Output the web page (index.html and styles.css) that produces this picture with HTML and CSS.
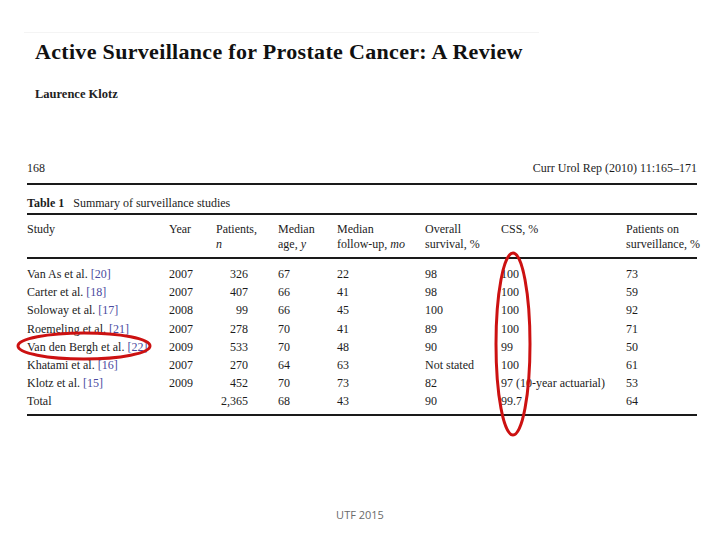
FILE: index.html
```html
<!DOCTYPE html>
<html>
<head>
<meta charset="utf-8">
<link rel="stylesheet" href="styles.css">
</head>
<body>
<div class="slide">
  <div class="paper-head">
    <h1 class="title">Active Surveillance for Prostate Cancer: A Review</h1>
    <div class="author">Laurence Klotz</div>
  </div>
  <div class="page">
    <div class="running">
      <span>168</span>
      <span>Curr Urol Rep (2010) 11:165–171</span>
    </div>
    <div class="caption"><b>Table 1</b>&nbsp;&nbsp; Summary of surveillance studies</div>
    <table class="studies">
      <colgroup>
        <col class="c1"><col class="c2"><col class="c3"><col class="c4"><col class="c5"><col class="c6"><col class="c7"><col class="c8">
      </colgroup>
      <thead>
        <tr>
          <th>Study</th>
          <th>Year</th>
          <th>Patients,<br><i>n</i></th>
          <th>Median<br>age, <i>y</i></th>
          <th>Median<br>follow-up, <i>mo</i></th>
          <th>Overall<br>survival, %</th>
          <th>CSS, %</th>
          <th>Patients on<br>surveillance, %</th>
        </tr>
      </thead>
      <tbody>
        <tr><td>Van As et al. <span class="ref">[20]</span></td><td>2007</td><td class="num">326</td><td>67</td><td>22</td><td>98</td><td>100</td><td>73</td></tr>
        <tr><td>Carter et al. <span class="ref">[18]</span></td><td>2007</td><td class="num">407</td><td>66</td><td>41</td><td>98</td><td>100</td><td>59</td></tr>
        <tr><td>Soloway et al. <span class="ref">[17]</span></td><td>2008</td><td class="num">99</td><td>66</td><td>45</td><td>100</td><td>100</td><td>92</td></tr>
        <tr><td>Roemeling et al. <span class="ref">[21]</span></td><td>2007</td><td class="num">278</td><td>70</td><td>41</td><td>89</td><td>100</td><td>71</td></tr>
        <tr><td>Van den Bergh et al. <span class="ref">[22]</span></td><td>2009</td><td class="num">533</td><td>70</td><td>48</td><td>90</td><td>99</td><td>50</td></tr>
        <tr><td>Khatami et al. <span class="ref">[16]</span></td><td>2007</td><td class="num">270</td><td>64</td><td>63</td><td>Not stated</td><td>100</td><td>61</td></tr>
        <tr><td>Klotz et al. <span class="ref">[15]</span></td><td>2009</td><td class="num">452</td><td>70</td><td>73</td><td>82</td><td>97 (10-year actuarial)</td><td>53</td></tr>
        <tr><td>Total</td><td></td><td class="num">2,365</td><td>68</td><td>43</td><td>90</td><td>99.7</td><td>64</td></tr>
      </tbody>
    </table>
  </div>
  <div class="footer">UTF 2015</div>
  <svg class="marks" width="720" height="540" viewBox="0 0 720 540">
    <ellipse cx="84" cy="346" rx="66" ry="13" fill="none" stroke="#cc1111" stroke-width="3"/>
    <ellipse cx="513" cy="344" rx="17" ry="91" fill="none" stroke="#cc1111" stroke-width="3"/>
  </svg>
</div>
</body>
</html>
```

FILE: styles.css
```css
html, body {
  margin: 0;
  padding: 0;
  background: #ffffff;
}
.slide {
  position: relative;
  width: 720px;
  height: 540px;
  overflow: hidden;
  font-family: "Liberation Serif", "Times New Roman", serif;
  color: #1c1c1c;
}
.paper-head {
  margin: 32px 0 0 24px;
  width: 504px;
  padding: 6px 0 0 11px;
  border-top: 1px solid #f4f4f4;
}
.title {
  margin: 0;
  font-size: 22px;
  font-weight: bold;
  line-height: 26px;
  letter-spacing: 0.32px;
  color: #111;
}
.author {
  margin-top: 22px;
  font-size: 12.5px;
  font-weight: bold;
  line-height: 14px;
  color: #222;
}
.page {
  margin: 59px 0 0 27px;
  width: 670px;
  font-size: 12px;
}
.running {
  display: flex;
  justify-content: space-between;
  line-height: 16px;
  padding-bottom: 7px;
  border-bottom: 2px solid #1a1a1a;
}
.caption {
  line-height: 16px;
  padding: 10px 0 2px;
  border-bottom: 2px solid #1a1a1a;
}
.caption b {
  font-weight: bold;
}
.studies {
  width: 670px;
  border-collapse: collapse;
  table-layout: fixed;
  border-bottom: 2px solid #1a1a1a;
}
.c1 { width: 142px; }
.c2 { width: 47px; }
.c3 { width: 62px; }
.c4 { width: 59px; }
.c5 { width: 88px; }
.c6 { width: 76px; }
.c7 { width: 125px; }
.c8 { width: 71px; }
.studies th {
  text-align: left;
  font-weight: normal;
  vertical-align: top;
  line-height: 15px;
  padding: 7px 0 5px;
  border-bottom: 2px solid #1a1a1a;
  white-space: nowrap;
}
.studies td {
  padding: 0;
  line-height: 18.2px;
  white-space: nowrap;
}
.studies tbody tr:first-child td {
  padding-top: 6px;
}
.studies tbody tr:last-child td {
  padding-bottom: 3px;
}
.studies td.num {
  text-align: right;
  padding-right: 30px;
}
.ref {
  color: #4a4aa0;
}
.footer {
  position: absolute;
  left: 0;
  right: 0;
  top: 507px;
  text-align: center;
  font-family: "Open Sans", "Liberation Sans", sans-serif;
  font-size: 11px;
  color: #6a6a6a;
}
.marks {
  position: absolute;
  left: 0;
  top: 0;
  pointer-events: none;
}
```
